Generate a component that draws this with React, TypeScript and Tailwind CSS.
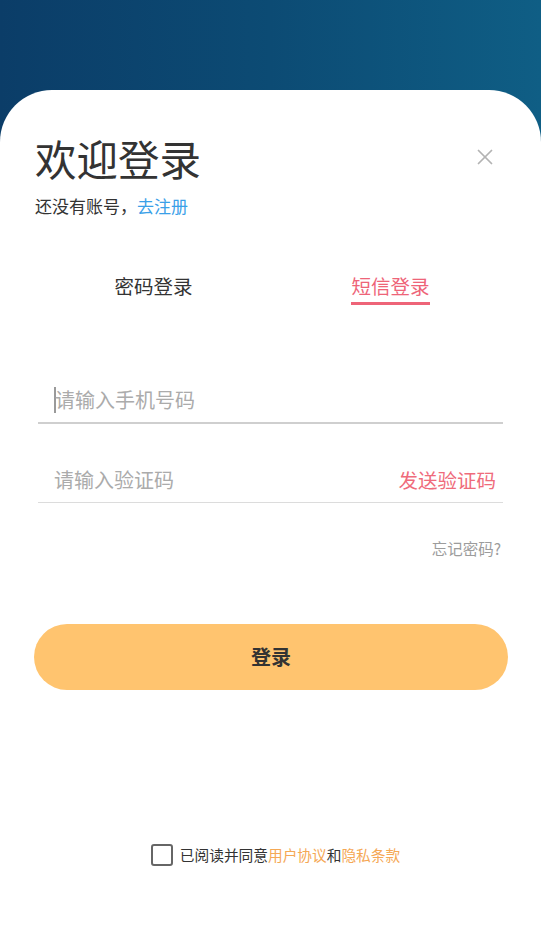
import { X } from "lucide-react";

const font = { fontFamily: '"Noto Sans CJK SC", "Noto Sans", sans-serif' };

export default function App() {
  return (
    <div
      className="flex min-h-[945px] w-[541px] flex-col bg-gradient-to-r from-[#0b3d68] via-[#0c4b74] to-[#0f5e85]"
      style={font}
    >
      <div className="h-[90px] shrink-0" />
      <div className="flex flex-1 flex-col rounded-t-[52px] bg-white px-[35px] pt-[40px]">
        <div className="flex items-start justify-between">
          <h1 className="text-[41.5px] leading-[56px] text-[#333]">欢迎登录</h1>
          <button type="button" className="mr-[8px] mt-[14px] text-[#b3b3b3]">
            <X className="h-[26px] w-[26px]" strokeWidth={1.6} />
          </button>
        </div>
        <p className="mt-[8px] text-[17px] leading-[24px] text-[#333]">
          还没有账号，<span className="text-[#3aa0e8]">去注册</span>
        </p>

        <div className="mt-[54px] flex">
          <div className="flex flex-1 justify-center pl-[3px]">
            <span className="text-[19.5px] leading-[28px] text-[#333]">密码登录</span>
          </div>
          <div className="flex flex-1 justify-center pl-[6px]">
            <span className="border-b-[3px] border-[#ee6478] pb-[2px] text-[19.5px] leading-[28px] text-[#ee6478]">
              短信登录
            </span>
          </div>
        </div>

        <div className="mx-[3px] mt-[73px] flex h-[46px] items-center border-b-2 border-[#cfcfcf] pl-[16px]">
          <span className="-mr-px h-[26px] w-[2px] bg-[#9a9a9a]" />
          <span className="text-[20px] text-[#ababab]">请输入手机号码</span>
        </div>

        <div className="mx-[3px] mt-[33px] flex h-[46px] items-center justify-between border-b border-[#dcdcdc] pl-[16px] pr-[7px]">
          <span className="text-[20px] text-[#ababab]">请输入验证码</span>
          <span className="text-[19.5px] text-[#ef6b7b]">发送验证码</span>
        </div>

        <div className="mt-[34px] flex justify-end pr-[5px]">
          <span className="text-[15.5px] text-[#9c9c9c]">忘记密码?</span>
        </div>

        <button
          type="button"
          className="mt-[64px] h-[66px] w-[474px] -ml-px rounded-full bg-[#ffc46f] text-[20px] font-bold text-[#333]"
        >
          登录
        </button>

        <div className="mt-[154px] flex items-center justify-center gap-[7px] pl-[10px]">
          <span className="h-[22px] w-[22px] rounded-[3px] border-2 border-[#666]" />
          <span className="text-[14.7px] text-[#333]">
            已阅读并同意<span className="text-[#f5a855]">用户协议</span>和
            <span className="text-[#f5a855]">隐私条款</span>
          </span>
        </div>
      </div>
    </div>
  );
}
